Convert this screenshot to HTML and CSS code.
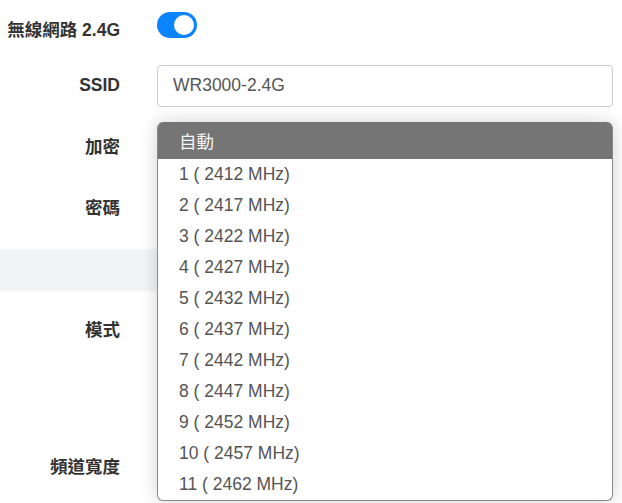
FILE: index.html
```html
<!DOCTYPE html>
<html lang="zh-Hant">
<head>
  <meta charset="UTF-8" />
  <meta name="viewport" content="width=device-width, initial-scale=1.0"/>
  <title>無線網路 2.4G</title>
<link rel="stylesheet" href="styles.css">
</head>
<body>

  <div class="page">
    <div class="row row-first">
      <label class="label">無線網路 2.4G</label>
      <div class="field">
        <span class="switch on"><span class="knob"></span></span>
      </div>
    </div>

    <div class="row row-ssid">
      <label class="label">SSID</label>
      <div class="field">
        <div class="input">WR3000-2.4G</div>
      </div>
    </div>

    <div class="row">
      <label class="label">加密</label>
      <div class="field">
        <div class="input"></div>
      </div>
    </div>

    <div class="row">
      <label class="label">密碼</label>
      <div class="field">
        <div class="input"></div>
      </div>
    </div>

    <div class="band"></div>

    <div class="row">
      <label class="label">模式</label>
      <div class="field">
        <div class="input"></div>
      </div>
    </div>

    <div class="row row-tall">
      <label class="label"></label>
      <div class="field"></div>
    </div>

    <div class="row">
      <label class="label">頻道寬度</label>
      <div class="field">
        <div class="input"></div>
      </div>
    </div>

    <ul class="dropdown">
      <li class="selected">自動</li>
      <li>1 ( 2412 MHz)</li>
      <li>2 ( 2417 MHz)</li>
      <li>3 ( 2422 MHz)</li>
      <li>4 ( 2427 MHz)</li>
      <li>5 ( 2432 MHz)</li>
      <li>6 ( 2437 MHz)</li>
      <li>7 ( 2442 MHz)</li>
      <li>8 ( 2447 MHz)</li>
      <li>9 ( 2452 MHz)</li>
      <li>10 ( 2457 MHz)</li>
      <li>11 ( 2462 MHz)</li>
    </ul>
  </div>

</body>
</html>
```

FILE: styles.css
```css
* {
  box-sizing: border-box;
}

html, body {
  height: 100%;
}

body {
  margin: 0;
  padding: 0;
  background: #fff;
  font-family: 'Liberation Sans', 'Noto Sans CJK TC', sans-serif;
  color: #333;
  overflow: hidden;
}

.page {
  position: relative;
  min-height: 503px;
  padding-right: 9px;
}

.row {
  display: flex;
  align-items: center;
  height: 61px;
}

.row-first {
  height: 56px;
}

.row-ssid {
  height: 59px;
}

.row-tall {
  height: 76px;
}

.label {
  width: 120px;
  flex: none;
  text-align: right;
  font-weight: bold;
  font-size: 17.5px;
  color: #333;
  white-space: nowrap;
}

.field {
  flex: 1;
  margin-left: 37px;
}

.switch {
  display: block;
  width: 40px;
  height: 26px;
  border-radius: 13px;
  background: #0a84ff;
  position: relative;
  margin-top: -6px;
}

.switch .knob {
  position: absolute;
  right: 3px;
  top: 3px;
  width: 20px;
  height: 20px;
  border-radius: 50%;
  background: #fff;
}

.input {
  height: 42px;
  border: 1px solid #ccc;
  border-radius: 4px;
  padding: 0 15px;
  display: flex;
  align-items: center;
  font-size: 17.5px;
  color: #555;
}

.band {
  height: 42px;
  margin: 12px 0 7px;
  background: #f2f4f6;
}

.dropdown {
  position: absolute;
  left: 157px;
  top: 122px;
  width: 456px;
  margin: 0;
  padding: 0;
  list-style: none;
  background: #fff;
  border: 1px solid #8a8a8a;
  border-top: none;
  border-radius: 6px;
  overflow: hidden;
  box-shadow: 0 0 18px rgba(0, 0, 0, 0.18);
}

.dropdown li {
  height: 31px;
  line-height: 31px;
  padding-left: 21px;
  font-size: 17.5px;
  color: #555;
}

.dropdown li.selected {
  height: 37px;
  line-height: 40px;
  background: #757575;
  color: #f4f4f4;
}
```
